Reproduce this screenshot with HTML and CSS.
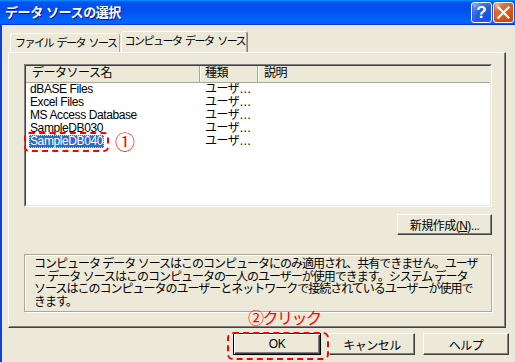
FILE: index.html
```html
<!DOCTYPE html>
<html lang="ja">
<head>
  <meta charset="UTF-8">
  <title>データ ソースの選択</title>
  <link rel="stylesheet" href="styles.css">
</head>
<body>
  <div class="window">
    <div class="titlebar">
      <span class="title">データ ソースの選択</span>
      <div class="title-buttons">
        <span class="tb-btn help">?</span>
        <span class="tb-btn close">
          <svg width="13" height="13" viewBox="0 0 13 13">
            <path d="M1.5 1.5 L11.5 11.5 M11.5 1.5 L1.5 11.5" stroke="#fff" stroke-width="2.2" stroke-linecap="square"/>
          </svg>
        </span>
      </div>
    </div>

    <div class="frame">
      <div class="client">
        <div class="tabs">
          <div class="tab">ファイル データ ソース</div>
          <div class="tab active">コンピュータ データ ソース</div>
        </div>

        <div class="panel">
          <div class="listview">
            <div class="lv-inner">
              <div class="lv-header">
                <div class="col c1">データソース名</div>
                <div class="col c2">種類</div>
                <div class="col c3">説明</div>
              </div>
              <div class="lv-row"><span class="c1"><span class="name">dBASE Files</span></span><span class="c2">ユーザ…</span></div>
              <div class="lv-row"><span class="c1"><span class="name">Excel Files</span></span><span class="c2">ユーザ…</span></div>
              <div class="lv-row"><span class="c1"><span class="name">MS Access Database</span></span><span class="c2">ユーザ…</span></div>
              <div class="lv-row"><span class="c1"><span class="name">SampleDB030</span></span><span class="c2">ユーザ…</span></div>
              <div class="lv-row"><span class="c1"><span class="name selected mark">SampleDB040<span class="callout-num">①</span></span></span><span class="c2">ユーザ…</span></div>
            </div>
          </div>

          <div class="new-row">
            <button class="btn new">新規作成(<u>N</u>)...</button>
          </div>

          <div class="groupbox">
            コンピュータ データ ソースはこのコンピュータにのみ適用され、共有できません。ユーザ<br>
            ー データ ソースはこのコンピュータの一人のユーザーが使用できます。システム データ<br>
            ソースはこのコンピュータのユーザーとネットワークで接続されているユーザーが使用で<br>
            きます。
          </div>
        </div>

        <div class="bottom-buttons">
          <span class="ok-wrap">
            <span class="callout-text">②クリック</span>
            <button class="btn ok">OK</button>
          </span>
          <button class="btn">キャンセル</button>
          <button class="btn">ヘルプ</button>
        </div>
      </div>
    </div>
  </div>
</body>
</html>
```

FILE: styles.css
```css
body {
  margin: 0;
  width: 515px;
  height: 362px;
  overflow: hidden;
  font-family: "Liberation Sans", "Noto Sans CJK JP", sans-serif;
  font-size: 12px;
  color: #000;
  background-color: #ece9d8;
}

.window {
  display: flex;
  flex-direction: column;
  width: 515px;
  height: 362px;
}

/* title bar */
.titlebar {
  height: 25px;
  flex-shrink: 0;
  display: flex;
  align-items: center;
  justify-content: space-between;
  padding: 0 1px 0 5px;
  background: linear-gradient(180deg, #0997ff, #0053ee 8%, #0050ee 40%, #0066ff 88%, #0066ff 93%, #005bff 95%, #003dd7 96%, #003dd7);
}

.title {
  color: #fff;
  font-weight: bold;
  font-size: 13px;
  letter-spacing: -0.4px;
  text-shadow: 1px 1px #0f1089;
  line-height: 1;
}

.title-buttons {
  display: flex;
  gap: 1px;
}

.tb-btn {
  width: 21px;
  height: 21px;
  box-sizing: border-box;
  border: 1px solid #fff;
  border-radius: 3px;
  display: flex;
  align-items: center;
  justify-content: center;
}

.help {
  background: radial-gradient(circle at 90% 90%, #0054e9 0, #2263d5 55%, #4479e4 70%, #a3bbec 90%, #fff 100%);
  box-shadow: inset 0 -1px 2px 1px #4646ff;
  color: #fff;
  font-family: "Liberation Sans", sans-serif;
  font-weight: bold;
  font-size: 17px;
  line-height: 1;
}

.close {
  background: radial-gradient(circle at 90% 90%, #cc4600 0, #dc6527 55%, #cd7546 70%, #ffccb2 90%, #fff 100%);
  box-shadow: inset 0 -1px 2px 1px #da4600;
}

/* window body */
.frame {
  flex: 1;
  display: flex;
  border-left: 2px solid #0842d8;
}

.client {
  flex: 1;
  display: flex;
  flex-direction: column;
  padding: 6px 0 0 6px;
}

/* tabs */
.tabs {
  display: flex;
  align-items: flex-end;
  height: 21px;
  padding-left: 2px;
}

.tab {
  box-sizing: border-box;
  height: 19px;
  padding: 0 2px 0 4px;
  line-height: 18px;
  font-size: 11px;
  letter-spacing: -1.5px;
  word-spacing: 2px;
  white-space: nowrap;
  border: 1px solid #fff;
  border-bottom: none;
  border-right-color: #aca899;
  border-radius: 3px 3px 0 0;
}

.tab.active {
  height: 21px;
  padding: 0 2px 0 3px;
  line-height: 19px;
  border-right: 1px solid #808080;
  box-shadow: inset -1px 0 #aca899;
  margin-left: 1px;
}

.panel {
  box-sizing: border-box;
  width: 498px;
  height: 276px;
  border: 1px solid;
  border-color: #fff #404040 #404040 #fff;
  box-shadow: inset -1px -1px #808080;
  padding: 11px 0 0 15px;
}

/* list view */
.listview {
  box-sizing: border-box;
  width: 468px;
  height: 143px;
  border: 1px solid;
  border-color: #808080 #fff #fff #808080;
}

.lv-inner {
  box-sizing: border-box;
  height: 100%;
  background-color: #fff;
  border: 1px solid;
  border-color: #404040 #ece9d8 #ece9d8 #404040;
}

.lv-header {
  display: flex;
  height: 16px;
  background-color: #ece9d8;
  border-bottom: 1px solid #aca899;
}

.lv-header .col {
  box-sizing: border-box;
  line-height: 15px;
  letter-spacing: -0.5px;
  border-right: 1px solid #aca899;
  box-shadow: 1px 0 #fff;
}

.lv-header .col.c3 {
  flex: 1;
  border-right: none;
  box-shadow: none;
}

.c1 {
  display: inline-block;
  box-sizing: border-box;
  width: 174px;
  padding-left: 3px;
}

.lv-header .c1 {
  padding-left: 6px;
}

.c2 {
  display: inline-block;
  box-sizing: border-box;
  width: 58px;
  padding-left: 5px;
  letter-spacing: -0.5px;
}

.c3 {
  padding-left: 6px;
}

.lv-row {
  display: flex;
  height: 13px;
  line-height: 13px;
  white-space: nowrap;
}

.name {
  display: inline-block;
  padding: 0 1px;
  letter-spacing: -0.4px;
}

.name.selected {
  background-color: #316ac5;
  color: #fff;
  outline: 1px dotted #e8d890;
  outline-offset: -1px;
}

/* red annotations */
.mark {
  position: relative;
}

.mark::before {
  content: "";
  position: absolute;
  top: -3px;
  bottom: -4px;
  left: -5px;
  right: -5px;
  border: 2px dashed #f00;
  border-radius: 5px;
}

.callout-num {
  position: absolute;
  left: calc(100% + 11px);
  top: -3px;
  color: #f00;
  font-family: "Noto Sans CJK JP", sans-serif;
  font-size: 20px;
  line-height: 20px;
  letter-spacing: 0;
}

.ok-wrap {
  position: relative;
  display: inline-flex;
}

.ok-wrap::before {
  content: "";
  position: absolute;
  top: -1px;
  bottom: -5px;
  left: -6px;
  right: -8px;
  border: 2px dashed #f00;
  border-radius: 6px;
}

.callout-text {
  position: absolute;
  left: 15px;
  top: -25px;
  color: #f00;
  font-family: "Noto Sans CJK JP", sans-serif;
  font-size: 16px;
  line-height: 18px;
  letter-spacing: -1.5px;
  white-space: nowrap;
}

/* buttons */
.btn {
  box-sizing: border-box;
  width: 86px;
  height: 22px;
  padding: 0;
  font-family: inherit;
  font-size: 12px;
  letter-spacing: -0.5px;
  color: #000;
  background-color: #ece9d8;
  border: 1px solid;
  border-color: #fff #404040 #404040 #fff;
  box-shadow: inset -1px -1px #808080;
}

.btn.ok {
  width: 88px;
  border: 1px solid #000;
  box-shadow: inset 1px 1px #fff, inset -1px -1px #404040, inset -2px -2px #808080;
}

.new-row {
  display: flex;
  justify-content: flex-end;
  width: 468px;
  margin-top: 7px;
}

.btn.new {
  width: 95px;
  height: 21px;
}

.groupbox {
  box-sizing: border-box;
  width: 468px;
  height: 58px;
  margin-top: 19px;
  padding: 3px 0 0 9px;
  line-height: 12.5px;
  letter-spacing: -1px;
  white-space: nowrap;
  border: 1px solid #aca899;
  box-shadow: inset 1px 1px #fff, 1px 1px #fff;
}

.bottom-buttons {
  display: flex;
  gap: 8px;
  margin-top: 5px;
  margin-left: 225px;
}
```
